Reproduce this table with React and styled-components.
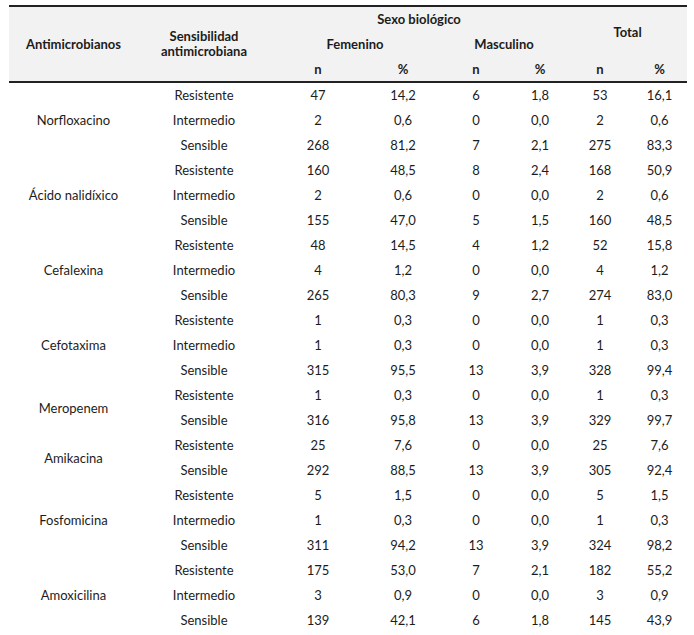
import React from "react";
import styled, { createGlobalStyle } from "styled-components";

const Global = createGlobalStyle`
  html, body { margin: 0; padding: 0; background: #ffffff; }
  body { font-family: "Lato", "Open Sans", sans-serif; color: #1c1c1c; }
`;

const Wrap = styled.div`
  padding: 5px 7px 0 9px;
`;

const Table = styled.table`
  border-collapse: collapse;
  width: 678px;
  table-layout: fixed;
  font-size: 13px;
`;

const Head = styled.thead`
  background: #f2f2f2;
  border-top: 2px solid #222;
  border-bottom: 2px solid #222;
`;

const Th = styled.th`
  font-weight: 700;
  text-align: center;
  vertical-align: middle;
  padding: 0;
  height: ${(p) => p.$h || 25}px;
  line-height: 15px;
`;

const Td = styled.td`
  text-align: center;
  vertical-align: middle;
  padding: 0;
  height: 25px;
  line-height: 15px;
`;

const widths = [129, 132, 96, 74, 72, 56, 64, 55];

const data = [
  ["Norfloxacino", [
    ["Resistente", "47", "14,2", "6", "1,8", "53", "16,1"],
    ["Intermedio", "2", "0,6", "0", "0,0", "2", "0,6"],
    ["Sensible", "268", "81,2", "7", "2,1", "275", "83,3"],
  ]],
  ["Ácido nalidíxico", [
    ["Resistente", "160", "48,5", "8", "2,4", "168", "50,9"],
    ["Intermedio", "2", "0,6", "0", "0,0", "2", "0,6"],
    ["Sensible", "155", "47,0", "5", "1,5", "160", "48,5"],
  ]],
  ["Cefalexina", [
    ["Resistente", "48", "14,5", "4", "1,2", "52", "15,8"],
    ["Intermedio", "4", "1,2", "0", "0,0", "4", "1,2"],
    ["Sensible", "265", "80,3", "9", "2,7", "274", "83,0"],
  ]],
  ["Cefotaxima", [
    ["Resistente", "1", "0,3", "0", "0,0", "1", "0,3"],
    ["Intermedio", "1", "0,3", "0", "0,0", "1", "0,3"],
    ["Sensible", "315", "95,5", "13", "3,9", "328", "99,4"],
  ]],
  ["Meropenem", [
    ["Resistente", "1", "0,3", "0", "0,0", "1", "0,3"],
    ["Sensible", "316", "95,8", "13", "3,9", "329", "99,7"],
  ]],
  ["Amikacina", [
    ["Resistente", "25", "7,6", "0", "0,0", "25", "7,6"],
    ["Sensible", "292", "88,5", "13", "3,9", "305", "92,4"],
  ]],
  ["Fosfomicina", [
    ["Resistente", "5", "1,5", "0", "0,0", "5", "1,5"],
    ["Intermedio", "1", "0,3", "0", "0,0", "1", "0,3"],
    ["Sensible", "311", "94,2", "13", "3,9", "324", "98,2"],
  ]],
  ["Amoxicilina", [
    ["Resistente", "175", "53,0", "7", "2,1", "182", "55,2"],
    ["Intermedio", "3", "0,9", "0", "0,0", "3", "0,9"],
    ["Sensible", "139", "42,1", "6", "1,8", "145", "43,9"],
  ]],
];

export default function App() {
  return (
    <Wrap>
      <Global />
      <Table>
        <colgroup>
          {widths.map((w, i) => (
            <col key={i} style={{ width: w }} />
          ))}
        </colgroup>
        <Head>
          <tr>
            <Th rowSpan={3}>Antimicrobianos</Th>
            <Th rowSpan={3}>
              Sensibilidad
              <br />
              antimicrobiana
            </Th>
            <Th colSpan={4}>Sexo biológico</Th>
            <Th colSpan={2} rowSpan={2}>Total</Th>
          </tr>
          <tr>
            <Th colSpan={2}>Femenino</Th>
            <Th colSpan={2}>Masculino</Th>
          </tr>
          <tr>
            <Th $h={24}>n</Th>
            <Th $h={24}>%</Th>
            <Th $h={24}>n</Th>
            <Th $h={24}>%</Th>
            <Th $h={24}>n</Th>
            <Th $h={24}>%</Th>
          </tr>
        </Head>
        <tbody>
          {data.map(([name, rows]) =>
            rows.map((r, i) => (
              <tr key={name + i}>
                {i === 0 && <Td rowSpan={rows.length}>{name}</Td>}
                {r.map((v, j) => (
                  <Td key={j}>{v}</Td>
                ))}
              </tr>
            ))
          )}
        </tbody>
      </Table>
    </Wrap>
  );
}
